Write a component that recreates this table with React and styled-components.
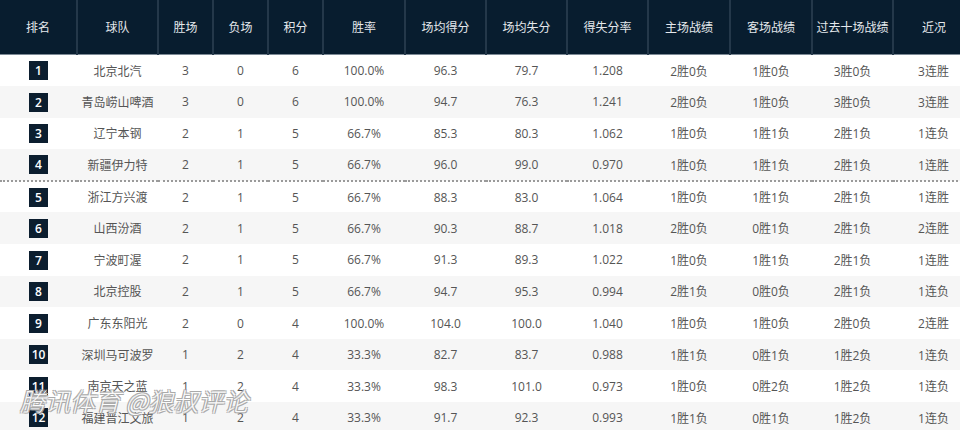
import React from "react";
import styled, { createGlobalStyle } from "styled-components";

const Global = createGlobalStyle`
  html, body { margin: 0; padding: 0; background: #fff; overflow: hidden; }
  body { font-family: "Open Sans", "Noto Sans CJK SC", sans-serif; }
`;

const Page = styled.div`
  position: relative;
  width: 960px;
  height: 430px;
  overflow: hidden;
`;

const Table = styled.table`
  width: 974px;
  table-layout: fixed;
  border-collapse: collapse;
  font-size: 12px;
`;

const HeadCell = styled.th`
  height: 54px;
  padding: 0;
  background: #081d2f;
  color: #e4e8ec;
  font-weight: normal;
  text-align: center;
  border-left: 2px solid #24384a;
  border-bottom: 1px solid #7d8a96;
  &:first-child { border-left: none; }
`;

const Row = styled.tr`
  height: 31.6px;
  background: ${(p) => (p.$alt ? "#f6f6f6" : "#ffffff")};
  border-top: ${(p) => (p.$cut ? "2px dotted #9a9a9a" : "none")};
`;

const Cell = styled.td`
  padding: 0;
  text-align: center;
  color: #555;
  white-space: nowrap;
`;

const Badge = styled.span`
  display: inline-flex;
  align-items: center;
  justify-content: center;
  width: 19px;
  height: 19px;
  background: #0c1e2f;
  color: #fff;
  font-size: 12px;
  font-weight: 600;
  vertical-align: middle;
`;

const Watermark = styled.div`
  position: absolute;
  left: 20px;
  top: 382px;
  font-family: "Noto Sans CJK SC", sans-serif;
  font-size: 25px;
  font-weight: 300;
  font-style: italic;
  color: rgba(255, 255, 255, 0.95);
  text-shadow: 1px 1px 0 #aaa, -1px -1px 0 #aaa, 1px -1px 0 #aaa, -1px 1px 0 #aaa;
  pointer-events: none;
  white-space: nowrap;
`;

const widths = [77, 81, 55, 55, 55, 82, 81, 81, 81, 82, 82, 81, 81];
const heads = ["排名", "球队", "胜场", "负场", "积分", "胜率", "场均得分", "场均失分", "得失分率", "主场战绩", "客场战绩", "过去十场战绩", "近况"];

const rows = [
  ["北京北汽", 3, 0, 6, "100.0%", "96.3", "79.7", "1.208", "2胜0负", "1胜0负", "3胜0负", "3连胜"],
  ["青岛崂山啤酒", 3, 0, 6, "100.0%", "94.7", "76.3", "1.241", "2胜0负", "1胜0负", "3胜0负", "3连胜"],
  ["辽宁本钢", 2, 1, 5, "66.7%", "85.3", "80.3", "1.062", "1胜0负", "1胜1负", "2胜1负", "1连负"],
  ["新疆伊力特", 2, 1, 5, "66.7%", "96.0", "99.0", "0.970", "1胜0负", "1胜1负", "2胜1负", "1连胜"],
  ["浙江方兴渡", 2, 1, 5, "66.7%", "88.3", "83.0", "1.064", "1胜0负", "1胜1负", "2胜1负", "1连胜"],
  ["山西汾酒", 2, 1, 5, "66.7%", "90.3", "88.7", "1.018", "2胜0负", "0胜1负", "2胜1负", "2连胜"],
  ["宁波町渥", 2, 1, 5, "66.7%", "91.3", "89.3", "1.022", "1胜0负", "1胜1负", "2胜1负", "1连胜"],
  ["北京控股", 2, 1, 5, "66.7%", "94.7", "95.3", "0.994", "2胜1负", "0胜0负", "2胜1负", "1连负"],
  ["广东东阳光", 2, 0, 4, "100.0%", "104.0", "100.0", "1.040", "1胜0负", "1胜0负", "2胜0负", "2连胜"],
  ["深圳马可波罗", 1, 2, 4, "33.3%", "82.7", "83.7", "0.988", "1胜1负", "0胜1负", "1胜2负", "1连负"],
  ["南京天之蓝", 1, 2, 4, "33.3%", "98.3", "101.0", "0.973", "1胜0负", "0胜2负", "1胜2负", "1连负"],
  ["福建晋江文旅", 1, 2, 4, "33.3%", "91.7", "92.3", "0.993", "1胜1负", "0胜1负", "1胜2负", "1连负"],
];

export default function App() {
  return (
    <Page>
      <Global />
      <Table>
        <colgroup>
          {widths.map((w, i) => (
            <col key={i} style={{ width: w }} />
          ))}
        </colgroup>
        <thead>
          <tr>
            {heads.map((h) => (
              <HeadCell key={h}>{h}</HeadCell>
            ))}
          </tr>
        </thead>
        <tbody>
          {rows.map((r, i) => (
            <Row key={i} $alt={i % 2 === 1} $cut={i === 4}>
              <Cell>
                <Badge>{i + 1}</Badge>
              </Cell>
              {r.map((v, j) => (
                <Cell key={j}>{v}</Cell>
              ))}
            </Row>
          ))}
        </tbody>
      </Table>
      <Watermark>腾讯体育 @狼叔评论</Watermark>
    </Page>
  );
}
